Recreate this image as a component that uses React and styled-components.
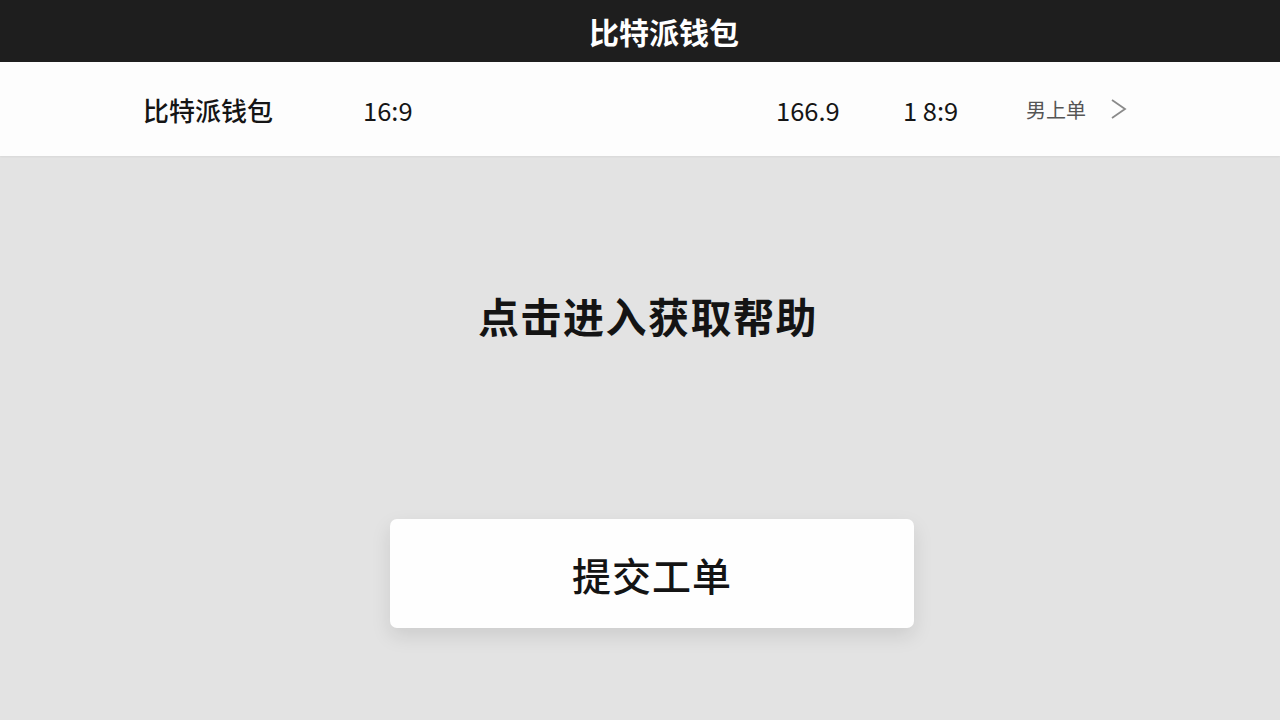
import React from "react";
import styled, { createGlobalStyle } from "styled-components";

const GlobalStyle = createGlobalStyle`
  html, body {
    margin: 0;
    padding: 0;
    background: #e3e3e3;
    font-family: "Noto Sans CJK SC", "Noto Sans", sans-serif;
  }
`;

const Page = styled.div`
  width: 1280px;
  height: 720px;
  display: flex;
  flex-direction: column;
  background: #e3e3e3;
  overflow: hidden;
`;

const TopBar = styled.header`
  height: 62px;
  background: #1e1e1e;
  color: #fff;
  display: flex;
  align-items: center;
  justify-content: center;
  padding-left: 48px;
  font-size: 30px;
  font-weight: 700;
`;

const InfoRow = styled.div`
  height: 94px;
  background: #fdfdfd;
  display: grid;
  grid-template-columns: 220px 1fr 127px 123px 84px auto;
  align-items: center;
  padding: 0 153px 0 143px;
  box-shadow: 0 1px 2px rgba(0, 0, 0, 0.05);
`;

const Cell = styled.span`
  font-size: ${(p) => p.$size || 25.5}px;
  color: ${(p) => p.$color || "#151515"};
  font-weight: ${(p) => p.$weight || 400};
  white-space: nowrap;
`;

const Chevron = styled.svg`
  width: 17px;
  height: 22px;
  display: block;
`;

const Main = styled.main`
  flex: 1;
  display: flex;
  flex-direction: column;
  align-items: center;
  padding-top: 133px;
  padding-left: 24px;
`;

const Heading = styled.h1`
  margin: 0 8px 0 0;
  font-size: 41px;
  line-height: 52px;
  font-weight: 700;
  color: #141414;
  letter-spacing: 1.5px;
`;

const SubmitButton = styled.button`
  margin-top: 178px;
  width: 524px;
  height: 109px;
  border: none;
  border-radius: 7px;
  background: #fefefe;
  box-shadow: 0 8px 20px rgba(0, 0, 0, 0.1);
  font-family: inherit;
  font-size: 39px;
  font-weight: 500;
  color: #141414;
  letter-spacing: 1px;
  cursor: pointer;
`;

export default function App() {
  return (
    <Page>
      <GlobalStyle />
      <TopBar>比特派钱包</TopBar>
      <InfoRow>
        <Cell $size={26} $weight={500}>比特派钱包</Cell>
        <Cell>16:9</Cell>
        <Cell>166.9</Cell>
        <Cell>1 8:9</Cell>
        <Cell $size={20} $color="#555">男上单</Cell>
        <Chevron viewBox="0 0 17 22">
          <polyline points="2,2 15,11 2,20" fill="none" stroke="#8a8a8a" strokeWidth="1.8" />
        </Chevron>
      </InfoRow>
      <Main>
        <Heading>点击进入获取帮助</Heading>
        <SubmitButton>提交工单</SubmitButton>
      </Main>
    </Page>
  );
}
